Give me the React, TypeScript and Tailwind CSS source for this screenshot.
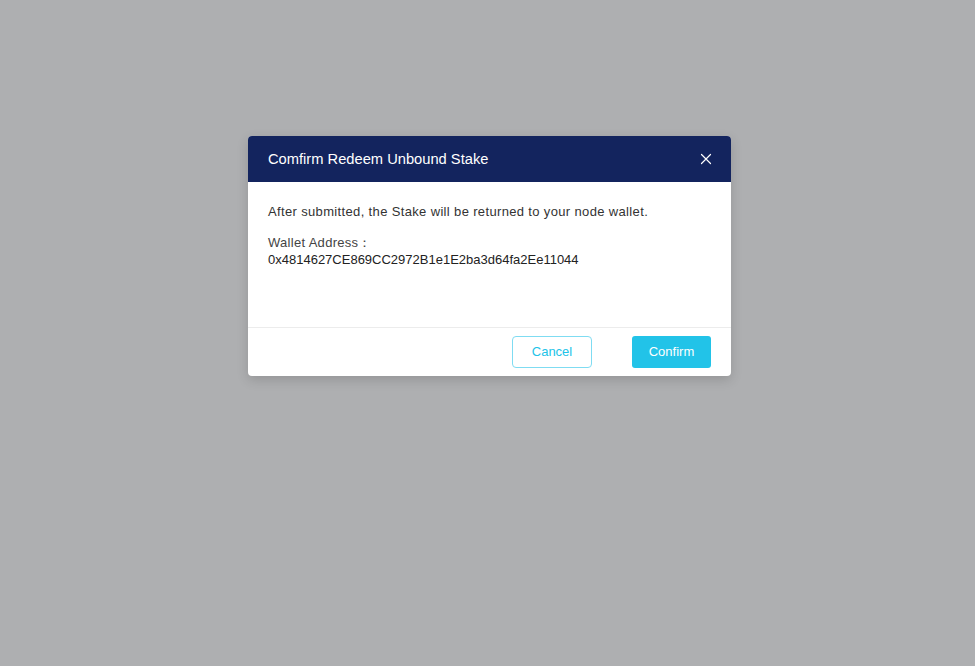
import React from "react";

export default function App() {
  return (
    <div className="w-[975px] h-[666px] bg-[#aeafb1] flex pl-[248px]" style={{ fontFamily: '"Liberation Sans", Arial, sans-serif' }}>
      <div className="mt-[136px] w-[483px] h-[240px] bg-white rounded-[4px] overflow-hidden flex flex-col shadow-[0_4px_12px_rgba(0,0,0,0.15)]">
        <div className="h-[46px] bg-[#13245e] flex items-center justify-between pl-[20px] pr-[19px]">
          <span className="text-white text-[14.7px] pt-[1px]">Comfirm Redeem Unbound Stake</span>
          <svg width="12" height="12" viewBox="0 0 12 12" className="text-white">
            <path d="M1.5 1.5 L10.5 10.5 M10.5 1.5 L1.5 10.5" stroke="currentColor" strokeWidth="1.2" strokeLinecap="round" />
          </svg>
        </div>
        <div className="flex-1 px-[20px] pt-[21px] text-[13px] text-[#333]">
          <p className="leading-[18px] tracking-[0.35px]">After submitted, the Stake will be returned to your node wallet.</p>
          <p className="leading-[17px] mt-[13px] text-[#444] tracking-[0.3px]">Wallet Address：</p>
          <p className="leading-[17px] text-[#222]">0x4814627CE869CC2972B1e1E2ba3d64fa2Ee11044</p>
        </div>
        <div className="h-[49px] border-t border-[#ececec] flex items-center justify-end pr-[20px] gap-[40px]">
          <button className="w-[80px] h-[32px] rounded-[4px] border border-[#7fdcf2] text-[#22c3e8] text-[13px]">Cancel</button>
          <button className="w-[79px] h-[32px] rounded-[3px] bg-[#22c3e8] text-white text-[13px]">Confirm</button>
        </div>
      </div>
    </div>
  );
}
